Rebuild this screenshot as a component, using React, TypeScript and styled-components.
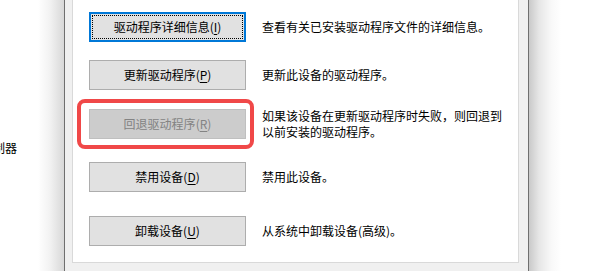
import styled, { createGlobalStyle } from "styled-components";

const GlobalStyle = createGlobalStyle`
  html, body {
    margin: 0;
    padding: 0;
    background: #ffffff;
    overflow: hidden;
  }
  body {
    font-family: "Noto Sans CJK SC", "Microsoft YaHei", "Liberation Sans", sans-serif;
    font-size: 12px;
    color: #000;
  }
`;

export const Page = styled.div`
  width: 600px;
  height: 271px;
  display: flex;
  overflow: hidden;
`;

export const BackPane = styled.div`
  width: 64px;
  flex: none;
  padding-top: 140px;
  box-sizing: border-box;
  overflow: hidden;
  background: linear-gradient(
    to right,
    #ffffff 0,
    #ffffff 38px,
    #f2f2f2 50px,
    #d8d8d8 64px
  );
`;

export const TreeLabel = styled.div`
  margin-left: -19px;
  line-height: 16px;
  white-space: nowrap;
`;

export const Dialog = styled.div`
  width: 465px;
  flex: none;
  box-sizing: border-box;
  border-left: 1px solid #6f6f6f;
  border-right: 1px solid #6f6f6f;
  background: #f0f0f0;
  padding: 0 9px 0 7px;
`;

export const Panel = styled.div`
  height: 263px;
  box-sizing: border-box;
  background: #ffffff;
  border: 1px solid #d9d9d9;
  border-top: none;
  padding: 12px 0 0 16px;
`;

export const Row = styled.div<{ $top?: number }>`
  display: flex;
  align-items: center;
  gap: 16px;
  margin-top: ${(p) => p.$top ?? 0}px;
`;

export const Button = styled.div<{ $focused?: boolean; $disabled?: boolean }>`
  position: relative;
  flex: none;
  width: 157px;
  height: 30px;
  box-sizing: border-box;
  display: flex;
  align-items: center;
  justify-content: center;
  background: ${(p) => (p.$disabled ? "#cccccc" : "#e1e1e1")};
  border: ${(p) =>
    p.$focused ? "2px solid #0078d7" : p.$disabled ? "1px solid #bfbfbf" : "1px solid #adadad"};
  color: ${(p) => (p.$disabled ? "#838383" : "#000")};
  line-height: 16px;
  white-space: nowrap;

  ${(p) =>
    p.$focused &&
    `
    &::before {
      content: "";
      position: absolute;
      inset: 1px;
      border: 1px dotted #000;
    }
  `}
`;

export const Key = styled.span`
  text-decoration: underline;
  text-underline-offset: 2px;
`;

export const Highlight = styled.div`
  position: relative;
  flex: none;

  &::after {
    content: "";
    position: absolute;
    left: -12px;
    right: -8px;
    top: -10px;
    bottom: -10px;
    border: 4px solid #f04848;
    border-radius: 8px;
    pointer-events: none;
  }
`;

export const Desc = styled.div`
  line-height: 16px;
  white-space: nowrap;
`;

export const ShadowPane = styled.div`
  flex: 1;
  background: linear-gradient(
    to right,
    #c9c9c9 0,
    #e6e6e6 10px,
    #f8f8f8 22px,
    #ffffff 32px
  );
`;

const Label = ({ text, k }: { text: string; k: string }) => (
  <span>
    {text}(<Key>{k}</Key>)
  </span>
);

const App = () => {
  return (
    <>
      <GlobalStyle />
      <Page>
        <BackPane>
          <TreeLabel>控制器</TreeLabel>
        </BackPane>
        <Dialog>
          <Panel>
            <Row>
              <Button $focused>
                <Label text="驱动程序详细信息" k="I" />
              </Button>
              <Desc>查看有关已安装驱动程序文件的详细信息。</Desc>
            </Row>
            <Row $top={18}>
              <Button>
                <Label text="更新驱动程序" k="P" />
              </Button>
              <Desc>更新此设备的驱动程序。</Desc>
            </Row>
            <Row $top={18}>
              <Highlight>
                <Button $disabled>
                  <Label text="回退驱动程序" k="R" />
                </Button>
              </Highlight>
              <Desc>
                如果该设备在更新驱动程序时失败，则回退到
                <br />
                以前安装的驱动程序。
              </Desc>
            </Row>
            <Row $top={22}>
              <Button>
                <Label text="禁用设备" k="D" />
              </Button>
              <Desc>禁用此设备。</Desc>
            </Row>
            <Row $top={24}>
              <Button>
                <Label text="卸载设备" k="U" />
              </Button>
              <Desc>从系统中卸载设备(高级)。</Desc>
            </Row>
          </Panel>
        </Dialog>
        <ShadowPane />
      </Page>
    </>
  );
};

export default App;
